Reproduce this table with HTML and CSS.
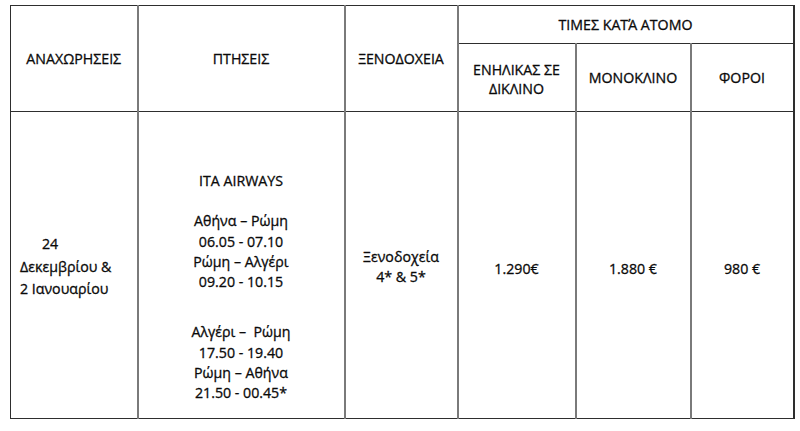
FILE: index.html
```html
<!DOCTYPE html>
<html lang="el">
<head>
<meta charset="utf-8">
<title>Αναχωρήσεις</title>
<link rel="stylesheet" href="styles.css">
</head>
<body>
<table class="trip">
  <colgroup>
    <col class="c-dep">
    <col class="c-fl">
    <col class="c-hot">
    <col class="c-adult">
    <col class="c-single">
    <col class="c-tax">
  </colgroup>
  <thead>
    <tr class="r-top">
      <th rowspan="2">ΑΝΑΧΩΡΗΣΕΙΣ</th>
      <th rowspan="2">ΠΤΗΣΕΙΣ</th>
      <th rowspan="2">ΞΕΝΟΔΟΧΕΙΑ</th>
      <th colspan="3">ΤΙΜΕΣ ΚΑΤΆ ΑΤΟΜΟ</th>
    </tr>
    <tr class="r-sub">
      <th class="two">ΕΝΗΛΙΚΑΣ ΣΕ<br>ΔΙΚΛΙΝΟ</th>
      <th>ΜΟΝΟΚΛΙΝΟ</th>
      <th>ΦΟΡΟΙ</th>
    </tr>
  </thead>
  <tbody>
    <tr class="r-body">
      <td class="dep">
        <div class="ind">24</div>
        <div>Δεκεμβρίου &amp;</div>
        <div>2 Ιανουαρίου</div>
      </td>
      <td class="flights">
        <div>ITA AIRWAYS</div>
        <div class="gap1"></div>
        <div>Αθήνα – Ρώμη</div>
        <div>06.05 - 07.10</div>
        <div>Ρώμη – Αλγέρι</div>
        <div>09.20 - 10.15</div>
        <div class="gap2"></div>
        <div>Αλγέρι –&nbsp; Ρώμη</div>
        <div>17.50 - 19.40</div>
        <div>Ρώμη – Αθήνα</div>
        <div>21.50 - 00.45*</div>
      </td>
      <td class="hotel">Ξενοδοχεία<br>4* &amp; 5*</td>
      <td class="price">1.290€</td>
      <td class="price">1.880 €</td>
      <td class="price">980 €</td>
    </tr>
  </tbody>
</table>
</body>
</html>
```

FILE: styles.css
```css
html, body {
  margin: 0;
  padding: 0;
  background: #ffffff;
}

body {
  font-family: "Open Sans", "Noto Sans", sans-serif;
  font-size: 14.2px;
  font-weight: 400;
  color: #0a0a0a;
  -webkit-text-stroke: 0.3px #0a0a0a;
}

.trip {
  margin: 5px 0 0 10px;
  width: 783px;
  table-layout: fixed;
  border-collapse: collapse;
}

.c-dep { width: 127px; }
.c-fl { width: 207px; }
.c-hot { width: 113px; }
.c-adult { width: 118px; }
.c-single { width: 115px; }
.c-tax { width: 103px; }

.trip th,
.trip td {
  border-top: 1px solid #2e2e2e;
  border-bottom: 1px solid #2e2e2e;
  border-left: 2px solid #7a7a7a;
  border-right: 2px solid #7a7a7a;
  padding: 0;
  text-align: center;
  vertical-align: middle;
  font-weight: 400;
}

.trip th:first-child,
.trip td:first-child {
  border-left: 1px solid #2e2e2e;
}

.trip th:last-child,
.trip td:last-child {
  border-right: 2px solid #2e2e2e;
}

.r-top { height: 38px; }
.r-sub { height: 68px; }
.r-body { height: 307px; }

.trip .two {
  line-height: 19px;
  padding-top: 2px;
}

.trip .dep {
  text-align: left;
  padding: 4px 0 0 9px;
  line-height: 22.5px;
}

.ind {
  padding-left: 22px;
}

.trip .flights {
  vertical-align: top;
  padding-top: 59px;
  line-height: 20.3px;
}

.gap1 { height: 20px; }
.gap2 { height: 30px; }

.trip .hotel {
  line-height: 20px;
  padding-top: 3px;
}

.trip .price {
  padding-top: 6px;
}
```
